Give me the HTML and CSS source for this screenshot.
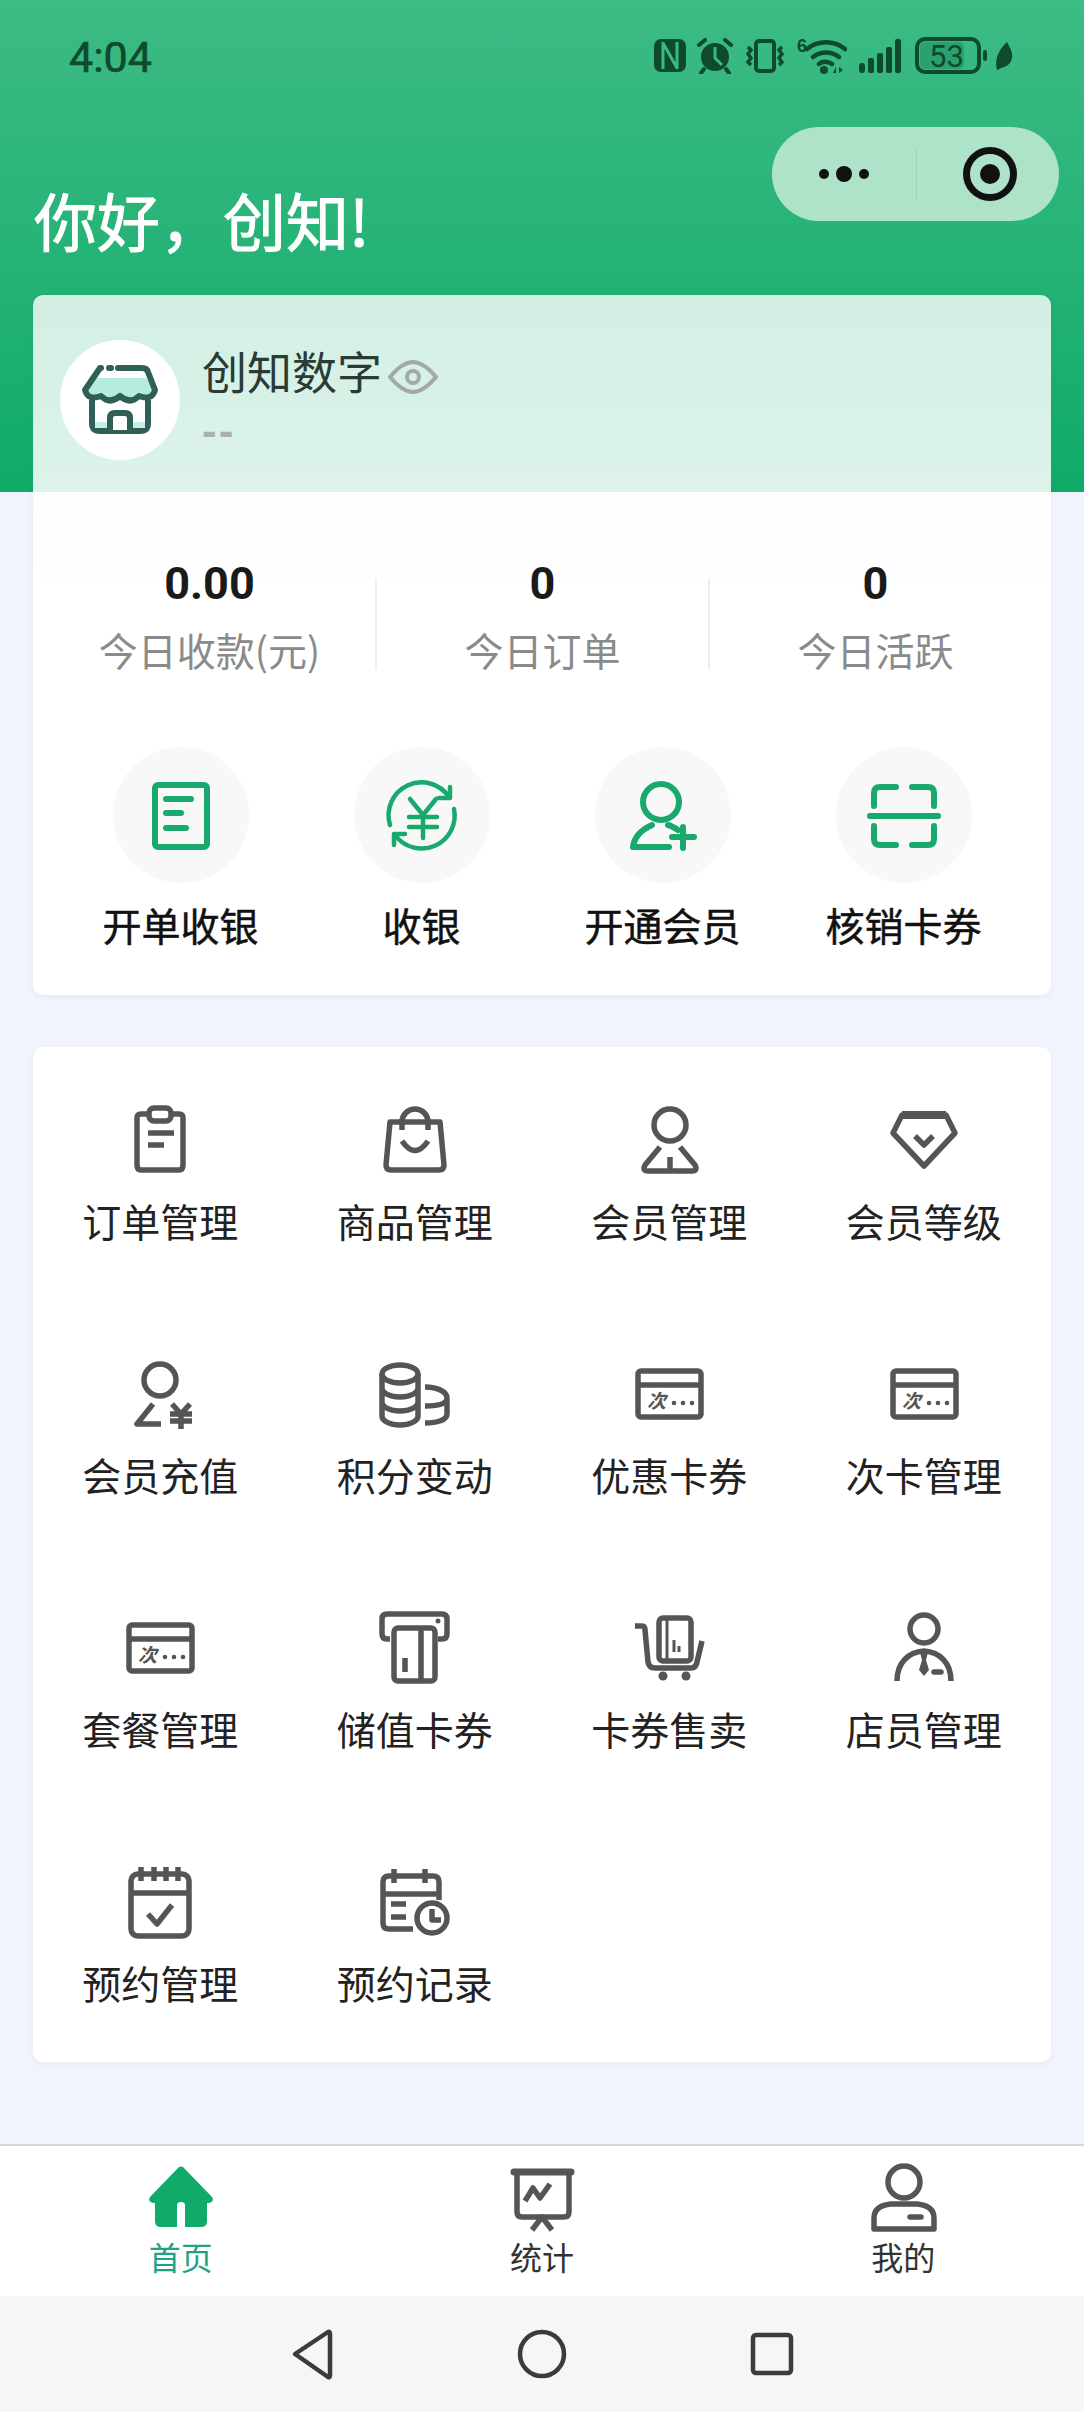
FILE: index.html
```html
<!DOCTYPE html>
<html lang="zh-CN">
<head>
    <meta charset="UTF-8">
    <meta name="viewport" content="width=device-width, initial-scale=1.0">
    <title>首页</title>
    <link rel="stylesheet" href="styles.css">
</head>
<body>
<div class="page">
    <!-- Status bar -->
    <div class="statusbar">
        <span class="time">4:04</span>
        <div class="status-icons">
            <svg class="st-nfc" width="32" height="33" viewBox="0 0 32 33"><rect x="0" y="0" width="32" height="33" rx="7" fill="#0e4a2e"/><path d="M9 3v27M23 3v27M9 4l14 25" stroke="#39b983" stroke-width="3" fill="none"/></svg>
            <svg class="st-alarm" width="36" height="36" viewBox="0 0 36 36"><circle cx="18" cy="19" r="14" fill="#0e4a2e"/><path d="M18 9v11l7 7" stroke="#39b983" stroke-width="3" fill="none"/><path d="M2 7l6-5M34 7l-6-5M7 31l-3 4M29 31l3 4" stroke="#0e4a2e" stroke-width="4" fill="none" stroke-linecap="round"/></svg>
            <svg class="st-vib" width="42" height="34" viewBox="0 0 42 34"><rect x="12" y="2" width="18" height="30" rx="3" fill="none" stroke="#0e4a2e" stroke-width="4"/><path d="M4 8l3 3-3 4 3 4-3 4 3 3M38 8l-3 3 3 4-3 4 3 4-3 3" stroke="#0e4a2e" stroke-width="3.5" fill="none"/></svg>
            <svg class="st-wifi" width="50" height="37" viewBox="0 0 50 37"><text x="0" y="15" class="st-six">6</text><path d="M10 12c11-9 27-9 38 0M16 20c8-6 18-6 26 0M22 27c3-3 9-3 13 0" stroke="#0e4a2e" stroke-width="4.5" fill="none" stroke-linecap="round"/><circle cx="27" cy="33" r="4" fill="#0e4a2e"/><path d="M36 36l3-6v6zM42 30v6l4-3z" fill="#0e4a2e"/></svg>
            <svg class="st-signal" width="44" height="35" viewBox="0 0 44 35"><rect x="1" y="25" width="6" height="10" rx="3"/><rect x="10" y="20" width="6" height="15" rx="2"/><rect x="19" y="15" width="6" height="20" rx="2"/><rect x="28" y="9" width="6" height="26" rx="2"/><rect x="37" y="1" width="6" height="34" rx="2"/></svg>
            <svg class="st-batt" width="74" height="37" viewBox="0 0 74 37"><rect x="2" y="2" width="62" height="33" rx="8" fill="none" stroke="#0e4a2e" stroke-width="4"/><rect x="5" y="5" width="44" height="27" rx="5" fill="#2da070"/><text x="14" y="30" class="st-level">53</text><rect x="68" y="13" width="4" height="11" rx="2" fill="#0e4a2e"/></svg>
            <svg class="st-leaf" width="18" height="28" viewBox="0 0 18 28"><path d="M12 0C15 6 18 10 17 16 16 22 11 25 6 26 4 27 3 28 2 28 0 20 1 10 12 0Z" fill="#0e4a2e"/></svg>
        </div>
    </div>

    <!-- Capsule -->
    <div class="capsule">
        <div class="capsule-dots"><i></i><b></b><i></i></div>
        <div class="capsule-line"></div>
        <div class="capsule-target"><b></b></div>
    </div>

    <h1 class="title">你好，创知!</h1>

    <!-- Shop card -->
    <div class="card shop-card">
        <div class="shop-head">
            <div class="avatar">
                <svg width="80" height="80" viewBox="0 0 80 80"><path d="M14 18H66L76 29Q70 41 59 36 50 45 40 36 30 45 21 36 10 41 4 29Z" fill="#b5ecdf"/><path d="M12 40V63Q12 71 20 71H60Q68 71 68 63V40" fill="#fff" stroke="#2f5f57" stroke-width="6"/><path d="M15 62h50v6H15z" fill="#c5f0e6"/><path d="M21 8H20L5 30Q8 41 21 36 30 45 40 36 50 45 59 36 72 41 75 30L68 12Q67 8 62 8H38" fill="none" stroke="#2f5f57" stroke-width="6" stroke-linecap="round" stroke-linejoin="round"/><path d="M30 70V58Q30 53 35 53H45Q50 53 50 58V70" fill="#fff" stroke="#2f5f57" stroke-width="6"/><path d="M29 8h2" stroke="#2f5f57" stroke-width="6" stroke-linecap="round"/></svg>
            </div>
            <div class="shop-text">
                <div class="shop-name">
                    <span>创知数字</span>
                    <svg class="eye" width="50" height="34" viewBox="0 0 50 34"><path d="M2 17C12 5 20 2 25 2S38 5 48 17C38 29 30 32 25 32S12 29 2 17Z" fill="none" stroke="#a3a9a5" stroke-width="4"/><circle cx="25" cy="17" r="6" fill="none" stroke="#a3a9a5" stroke-width="4"/></svg>
                </div>
                <div class="shop-sub">--</div>
            </div>
        </div>

        <div class="stats">
            <div class="stat"><div class="stat-num">0.00</div><div class="stat-label">今日收款(元)</div></div>
            <div class="stat-sep"></div>
            <div class="stat"><div class="stat-num">0</div><div class="stat-label">今日订单</div></div>
            <div class="stat-sep"></div>
            <div class="stat"><div class="stat-num">0</div><div class="stat-label">今日活跃</div></div>
        </div>

        <div class="actions">
            <div class="action">
                <div class="action-circle"><svg class="icon-green" width="80" height="80" viewBox="0 0 80 80"><rect x="14" y="10" width="52" height="62" rx="3"/><path d="M25 24H50M25 38H40M25 53H45"/></svg></div>
                <div class="action-label">开单收银</div>
            </div>
            <div class="action">
                <div class="action-circle"><svg class="icon-green icon-yen" width="80" height="80" viewBox="0 0 80 80"><path d="M8 50A33 33 0 0 1 67 22M72 34A33 33 0 0 1 13 60"/><path d="M68 12V23H57M12 70V59H23"/><path d="M28 24L41 40 54 24M27 42H55M27 52H55M41 40V63"/></svg></div>
                <div class="action-label">收银</div>
            </div>
            <div class="action">
                <div class="action-circle"><svg class="icon-green" width="80" height="80" viewBox="0 0 80 80"><circle cx="38" cy="27" r="18"/><path d="M29 50C18 55 11 63 10 72H46M45 50C49 51 52 53 55 55"/><path d="M49 62H71M60 52V73"/></svg></div>
                <div class="action-label">开通会员</div>
            </div>
            <div class="action">
                <div class="action-circle"><svg class="icon-green" width="80" height="80" viewBox="0 0 80 80"><path d="M32 12H16Q10 12 10 18V31M48 12H64Q70 12 70 18V31M6 41H74M10 51V64Q10 70 16 70H32M70 51V64Q70 70 64 70H48"/></svg></div>
                <div class="action-label">核销卡券</div>
            </div>
        </div>
    </div>

    <!-- Menu card -->
    <div class="card menu-card">
        <div class="menu-item">
            <svg class="icon" width="80" height="80" viewBox="0 0 80 80"><path d="M27 14H21Q17 14 17 18V65Q17 70 21 70H59Q63 70 63 65V18Q63 14 59 14H53"/><rect x="29" y="8" width="22" height="13" rx="5"/><path d="M28 33H54M28 45H44"/></svg>
            <div class="menu-label">订单管理</div>
        </div>
        <div class="menu-item">
            <svg class="icon" width="80" height="80" viewBox="0 0 80 80"><path d="M15 22H65L69 65Q69 70 64 70H16Q11 70 11 65Z"/><path d="M27 30V22A13 13 0 0 1 53 22V30M27 41Q40 60 53 41"/></svg>
            <div class="menu-label">商品管理</div>
        </div>
        <div class="menu-item">
            <svg class="icon" width="80" height="80" viewBox="0 0 80 80"><circle cx="41" cy="25" r="16"/><path d="M31 47L16 65Q13 71 19 71H63Q69 71 66 65L51 47M41 57V70"/></svg>
            <div class="menu-label">会员管理</div>
        </div>
        <div class="menu-item">
            <svg class="icon" width="80" height="80" viewBox="0 0 80 80"><path d="M18 15H62L71 33 40 66 9 33Z"/><path d="M18 15H62" stroke-width="8"/><path d="M31 36L40 45 49 36"/></svg>
            <div class="menu-label">会员等级</div>
        </div>

        <div class="menu-item">
            <svg class="icon" width="80" height="80" viewBox="0 0 80 80"><circle cx="40" cy="26" r="16"/><path d="M33 50L17 70H41"/><path d="M52 50L61 60 70 50M50 60H72M50 67H72M61 60V75"/></svg>
            <div class="menu-label">会员充值</div>
        </div>
        <div class="menu-item">
            <svg class="icon" width="80" height="80" viewBox="0 0 80 80"><ellipse cx="25" cy="20" rx="18" ry="9"/><path d="M7 20V62A18 9 0 0 0 43 62V20M7 34A18 9 0 0 0 43 34M7 48A18 9 0 0 0 43 48"/><path d="M50 33C63 33 72 38 72 44V60C72 66 62 69 50 69M50 52C62 52 72 50 72 44"/></svg>
            <div class="menu-label">积分变动</div>
        </div>
        <div class="menu-item">
            <svg class="icon" width="80" height="80" viewBox="0 0 80 80"><rect x="9" y="17" width="63" height="46" rx="3"/><path d="M9 31H72"/><text x="18" y="54" class="ci-text">次</text><g class="ci-dots"><circle cx="45" cy="49" r="2.3"/><circle cx="54" cy="49" r="2.3"/><circle cx="63" cy="49" r="2.3"/></g></svg>
            <div class="menu-label">优惠卡券</div>
        </div>
        <div class="menu-item">
            <svg class="icon" width="80" height="80" viewBox="0 0 80 80"><rect x="9" y="17" width="63" height="46" rx="3"/><path d="M9 31H72"/><text x="18" y="54" class="ci-text">次</text><g class="ci-dots"><circle cx="45" cy="49" r="2.3"/><circle cx="54" cy="49" r="2.3"/><circle cx="63" cy="49" r="2.3"/></g></svg>
            <div class="menu-label">次卡管理</div>
        </div>

        <div class="menu-item">
            <svg class="icon" width="80" height="80" viewBox="0 0 80 80"><rect x="9" y="17" width="63" height="46" rx="3"/><path d="M9 31H72"/><text x="18" y="54" class="ci-text">次</text><g class="ci-dots"><circle cx="45" cy="49" r="2.3"/><circle cx="54" cy="49" r="2.3"/><circle cx="63" cy="49" r="2.3"/></g></svg>
            <div class="menu-label">套餐管理</div>
        </div>
        <div class="menu-item">
            <svg class="icon" width="80" height="80" viewBox="0 0 80 80"><path d="M15 31H12Q7 31 7 26V11Q7 6 12 6H67Q72 6 72 11V26Q72 31 67 31H63"/><rect x="19" y="20" width="41" height="53" rx="4"/><path d="M46 20V73M30 50V64"/><circle cx="63" cy="13" r="2.5" class="ci-dots"/></svg>
            <div class="menu-label">储值卡券</div>
        </div>
        <div class="menu-item">
            <svg class="icon" width="80" height="80" viewBox="0 0 80 80"><path d="M6 18H13Q16 18 16 22L19 54Q20 60 26 60H62Q67 60 68 54L73 33"/><rect x="30" y="10" width="32" height="43" rx="4"/><path d="M38 11V52" class="thin"/><path d="M45 32V44M50 38V44" class="thin"/><g class="ci-dots"><circle cx="34" cy="68" r="4.5"/><circle cx="57" cy="68" r="4.5"/></g></svg>
            <div class="menu-label">卡券售卖</div>
        </div>
        <div class="menu-item">
            <svg class="icon" width="80" height="80" viewBox="0 0 80 80"><circle cx="40" cy="21" r="14"/><path d="M13 73C13 55 24 44 40 43 56 44 67 55 67 73"/><path class="ci-dots" d="M36 44H44L42 52 45 62 40 68 35 62 38 52Z"/><path d="M50 64H57" stroke-linecap="round"/></svg>
            <div class="menu-label">店员管理</div>
        </div>

        <div class="menu-item">
            <svg class="icon" width="80" height="80" viewBox="0 0 80 80"><rect x="11" y="12" width="58" height="62" rx="7"/><path d="M11 31H69M21 5V19M34 5V19M46 5V19M58 5V19"/><path d="M28 52L37 62 52 43"/></svg>
            <div class="menu-label">预约管理</div>
        </div>
        <div class="menu-item">
            <svg class="icon" width="80" height="80" viewBox="0 0 80 80"><path d="M64 38V20Q64 14 58 14H14Q8 14 8 20V61Q8 67 14 67H38M8 32H64M19 7V21M50 7V21M16 42H31M16 55H31"/><circle cx="57" cy="56" r="15"/><path d="M57 47V58H66"/></svg>
            <div class="menu-label">预约记录</div>
        </div>
    </div>

    <!-- Tab bar -->
    <div class="tabbar">
        <div class="tab tab-active">
            <svg width="80" height="80" viewBox="0 0 80 80"><path d="M38 10Q40 9 42 10L71 40Q74 44 68 46H66V64Q66 70 60 70H44V48Q44 45 40 45T36 48V70H20Q14 70 14 64V46H12Q6 44 9 40Z" fill="#10ab68"/></svg>
            <div class="tab-label">首页</div>
        </div>
        <div class="tab">
            <svg class="icon" width="80" height="80" viewBox="0 0 80 80"><path d="M12 15H69" stroke-width="7" stroke-linecap="round"/><path d="M15 18V55Q15 60 20 60H62Q67 60 67 55V18"/><path d="M23 44L31 31 38 41 48 27"/><path d="M30 73L40 60 50 73"/></svg>
            <div class="tab-label">统计</div>
        </div>
        <div class="tab">
            <svg class="icon" width="80" height="80" viewBox="0 0 80 80"><circle cx="41" cy="25" r="16"/><path d="M11 72V61C11 52 18 48 28 47H54C64 48 71 52 71 61V72Z"/><path d="M47 60H58" stroke-linecap="round"/></svg>
            <div class="tab-label">我的</div>
        </div>
    </div>

    <!-- Android nav -->
    <div class="navbar">
        <svg width="60" height="60" viewBox="0 0 60 60"><path d="M47 8L14 30 47 53Q49 54 49 51V10Q49 7 47 8Z" class="nav-shape"/></svg>
        <svg width="60" height="60" viewBox="0 0 60 60"><circle cx="30" cy="30" r="22" class="nav-shape"/></svg>
        <svg width="60" height="60" viewBox="0 0 60 60"><rect x="10" y="11" width="38" height="38" rx="3" class="nav-shape"/></svg>
    </div>
</div>
</body>
</html>
```

FILE: styles.css
```css
/* Base */
body {
    margin: 0;
    font-family: "Noto Sans CJK SC", "Liberation Sans", sans-serif;
    color: #222;
}

.page {
    position: relative;
    width: 1084px;
    height: 2412px;
    overflow: hidden;
    display: flex;
    flex-direction: column;
    background: linear-gradient(#3dbb85, #10ab68 492px, #f1f4fc 492px);
}

/* Status bar */
.statusbar {
    height: 114px;
    padding: 37px 71px 0 69px;
    box-sizing: border-box;
    display: flex;
    justify-content: space-between;
    align-items: flex-start;
}

.time {
    font-family: Roboto, sans-serif;
    font-size: 43px;
    line-height: 40px;
    color: #0e4a2e;
    -webkit-text-stroke: 0.6px #0e4a2e;
}

.status-icons {
    display: flex;
    align-items: center;
    gap: 11px;
}

.st-signal { fill: #0e4a2e; }
.st-batt { margin-left: 2px; }
.st-leaf { margin-left: -5px; }

.st-six {
    font-family: "Liberation Sans", sans-serif;
    font-size: 18px;
    font-weight: bold;
    fill: #0e4a2e;
}

.st-level {
    font-family: Roboto, sans-serif;
    font-size: 31px;
    fill: #0e4a2e;
}

/* Capsule */
.capsule {
    position: absolute;
    top: 127px;
    left: 772px;
    width: 287px;
    height: 94px;
    border-radius: 47px;
    background: #aee3c9;
    display: flex;
    align-items: center;
}

.capsule-dots {
    width: 144px;
    display: flex;
    justify-content: center;
    align-items: center;
    gap: 7px;
}

.capsule-dots i {
    width: 10px;
    height: 10px;
    border-radius: 50%;
    background: #111;
}

.capsule-dots b {
    width: 16px;
    height: 16px;
    border-radius: 50%;
    background: #111;
}

.capsule-line {
    width: 1px;
    height: 54px;
    background: #9ed5ba;
}

.capsule-target {
    margin-left: 46px;
    width: 54px;
    height: 54px;
    box-sizing: border-box;
    border: 7px solid #111;
    border-radius: 50%;
    display: flex;
    justify-content: center;
    align-items: center;
}

.capsule-target b {
    width: 20px;
    height: 20px;
    border-radius: 50%;
    background: #111;
}

/* Title */
.title {
    margin: 65px 0 36px 34px;
    font-size: 63px;
    line-height: 80px;
    font-weight: normal;
    color: #fff;
    -webkit-text-stroke: 1px #fff;
}

/* Cards */
.card {
    margin: 0 33px;
    border-radius: 10px;
    box-shadow: 0 2px 6px rgba(40, 60, 90, 0.05);
}

.shop-card {
    padding: 45px 0 46px;
    background: linear-gradient(rgba(255, 255, 255, 0.8), rgba(255, 255, 255, 0.86) 197px, #fff 300px);
}

.shop-head {
    display: flex;
    padding-left: 27px;
    gap: 22px;
}

.avatar {
    width: 120px;
    height: 120px;
    border-radius: 50%;
    background: #fff;
    display: flex;
    justify-content: center;
    align-items: center;
}

.shop-name {
    display: flex;
    align-items: center;
    gap: 6px;
    font-size: 45px;
    line-height: 62px;
    color: #2c3a34;
}

.eye { margin-top: 12px; }

.shop-sub {
    margin-top: 9px;
    font-family: "Liberation Sans", sans-serif;
    font-size: 44px;
    font-weight: bold;
    line-height: 40px;
    letter-spacing: 2px;
    color: #aab2ae;
}

/* Stats */
.stats {
    display: flex;
    margin: 96px 10px 0 11px;
}

.stat {
    flex: 1;
    text-align: center;
}

.stat-sep {
    width: 2px;
    height: 92px;
    margin-top: 22px;
    background: #eeeeee;
}

.stat-num {
    font-family: Roboto, sans-serif;
    font-size: 45px;
    font-weight: bold;
    line-height: 56px;
    color: #1a1a1a;
}

.stat-label {
    margin-top: 12px;
    font-size: 39px;
    line-height: 50px;
    color: #8a8a8a;
}

/* Quick actions */
.actions {
    display: grid;
    grid-template-columns: repeat(4, 1fr);
    margin-top: 73px;
    padding: 0 27px;
}

.action {
    display: flex;
    flex-direction: column;
    align-items: center;
}

.action-circle {
    width: 136px;
    height: 136px;
    border-radius: 50%;
    background: #f8f8f8;
    display: flex;
    justify-content: center;
    align-items: center;
}

.action-label {
    margin-top: 16px;
    font-size: 39px;
    line-height: 50px;
    color: #111;
    -webkit-text-stroke: 0.5px #111;
}

.icon-green {
    fill: none;
    stroke: #1aa96d;
    stroke-width: 6;
    stroke-linecap: round;
    stroke-linejoin: round;
}

.icon-yen { stroke-width: 4.5; }

/* Menu grid */
.menu-card {
    margin-top: 52px;
    padding: 53px 0 55px;
    background: #fff;
    display: grid;
    grid-template-columns: repeat(4, 1fr);
    row-gap: 109px;
}

.menu-item {
    display: flex;
    flex-direction: column;
    align-items: center;
}

.menu-label {
    margin-top: 15px;
    font-size: 39px;
    line-height: 50px;
}

.icon {
    fill: none;
    stroke: #555;
    stroke-width: 5.5;
    stroke-linejoin: round;
}

.icon .thin { stroke-width: 3; }

.icon .ci-dots {
    fill: #555;
    stroke: none;
}

.ci-text {
    font-size: 19px;
    font-weight: bold;
    font-style: italic;
    fill: #555;
    stroke: none;
}

/* Tab bar */
.tabbar {
    margin-top: auto;
    height: 152px;
    box-sizing: border-box;
    border-top: 2px solid #d5d6d9;
    padding-top: 11px;
    background: #fff;
    display: grid;
    grid-template-columns: repeat(3, 1fr);
}

.tab {
    display: flex;
    flex-direction: column;
    align-items: center;
}

.tab-label {
    font-size: 32px;
    line-height: 38px;
    color: #333;
}

.tab-active .tab-label { color: #1fa384; }

/* Android nav */
.navbar {
    height: 116px;
    background: #f6f6f6;
    display: flex;
    justify-content: center;
    align-items: center;
    gap: 171px;
}

.nav-shape {
    fill: none;
    stroke: #3b3b3b;
    stroke-width: 4.5;
    stroke-linejoin: round;
}
```
